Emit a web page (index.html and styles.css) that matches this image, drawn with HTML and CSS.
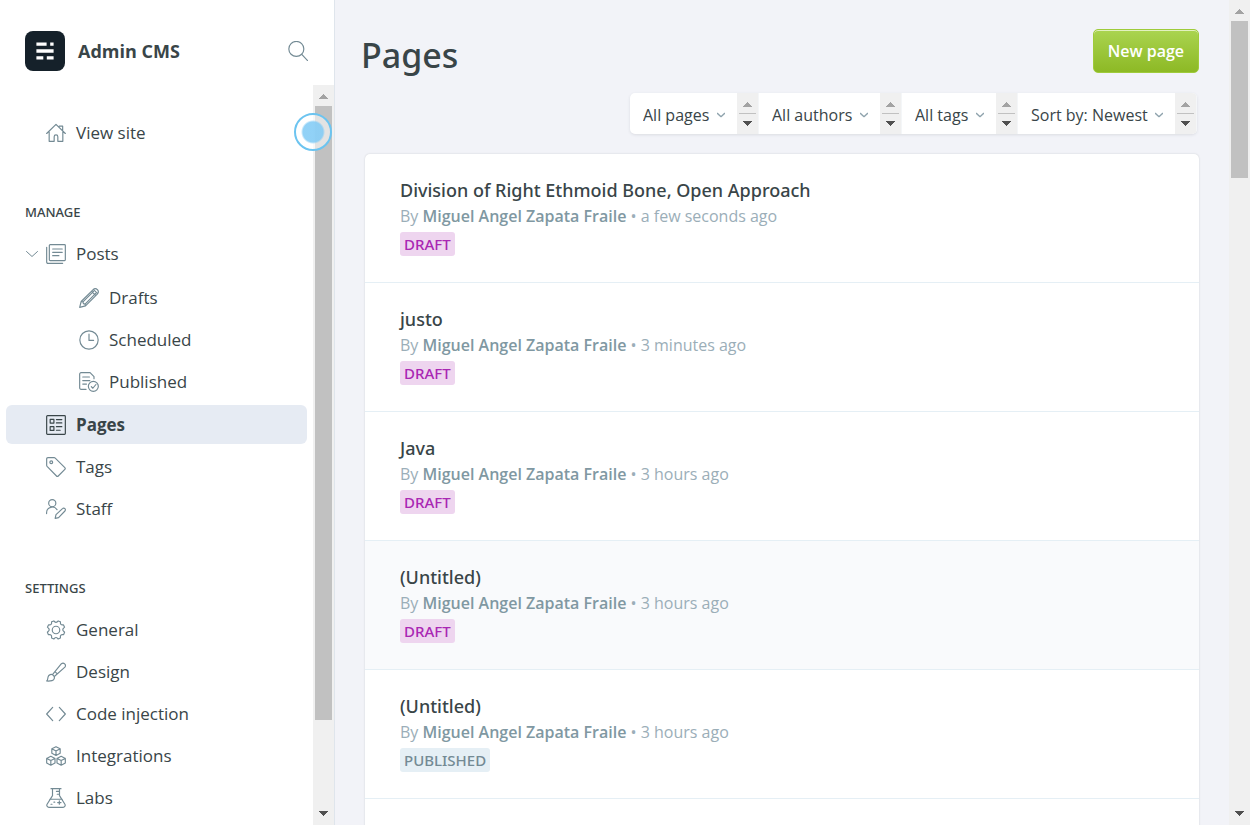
FILE: index.html
```html
<!DOCTYPE html>
<html lang="en">
<head>
<meta charset="utf-8">
<title>Pages - Admin CMS</title>
<link rel="stylesheet" href="styles.css">
</head>
<body>
<svg class="sprite" aria-hidden="true">
  <symbol id="arrow-up" viewBox="0 0 9 5"><path d="M4 0h1v1h1v1h1v1h1v1h1v1H0V4h1V3h1V2h1V1h1z"/></symbol>
  <symbol id="arrow-down" viewBox="0 0 9 5"><path d="M0 0h9v1H8v1H7v1H6v1H5v1H4V4H3V3H2V2H1V1H0z"/></symbol>
  <symbol id="chevron" viewBox="0 0 24 24"><path d="M1 7l11 10L23 7"/></symbol>
</svg>

<aside class="sidebar">
  <header class="brand">
    <svg class="logo" viewBox="0 0 40 40" aria-hidden="true">
      <rect width="40" height="40" rx="8" fill="#15212a"/>
      <path fill="#fff" d="M11.400 11.400h10.200v3.400H11.400zM25.200 11.400h3.400v3.400h-3.400zM11.400 18.300h17.200v3.400H11.400zM11.400 25.200h6.900v3.400h-6.900zM21.800 25.200h6.800v3.400h-6.800z"/>
    </svg>
    <span class="brand-name">Admin CMS</span>
    <button class="search" type="button" aria-label="Search">
      <svg class="icon" viewBox="0 0 24 24"><circle cx="10" cy="9.500" r="9"/><path d="M16.500 16l7 7.500"/></svg>
    </button>
  </header>

  <div class="sidebar-body">
    <nav class="nav">
      <ul class="nav-list nav-top">
        <li><a class="nav-link" href="#"><svg class="icon" viewBox="0 0 24 24"><path d="M.8 12.600L12 1.600l11.200 11M3.800 11v11h6v-5.500a2.200 2.200 0 0 1 4.400 0V22h6V11M16 3.800h4v4.800"/></svg>View site</a></li>
      </ul>

      <h2 class="nav-heading">Manage</h2>
      <ul class="nav-list">
        <li>
          <a class="nav-link" href="#"><svg class="icon expander" viewBox="0 0 24 24"><use href="#chevron"/></svg><svg class="icon" viewBox="0 0 24 24"><rect x="4" y=".8" width="19.200" height="19.200" rx="1"/><path d="M.8 4v17.700a1.500 1.500 0 0 0 1.500 1.500H20M8 6h11.500M8 10h11.500M8 14h7.500"/></svg>Posts</a>
          <ul class="nav-list nav-sub">
            <li><a class="nav-link" href="#"><svg class="icon" viewBox="0 0 24 24"><path d="M.8 23.200l1.800-7L17 1.900a3.500 3.500 0 0 1 5 0l.2.200a3.500 3.500 0 0 1 0 5L7.800 21.400zM2.600 16.200l2.200.5.500 2.100 2 .5.500 2.100M4.800 16.700L17.500 4M7.300 19.300L20 6.500M15 3.900l5.200 5.200M17.500 2l4.800 4.800"/></svg>Drafts</a></li>
            <li><a class="nav-link" href="#"><svg class="icon" viewBox="0 0 24 24"><circle cx="12" cy="12" r="11"/><path d="M12 5v7.500h5.500"/></svg>Scheduled</a></li>
            <li><a class="nav-link" href="#"><svg class="icon" viewBox="0 0 24 24"><path d="M8.500 20.800h-6A1.700 1.700 0 0 1 .8 19V2.500A1.700 1.700 0 0 1 2.500.8h10.800L18 5.500V8M4.500 6h8M4.500 10.300h8.500M4.500 14.500h4.500M14.800 17.600l1.800 1.900 3.700-4.500"/><circle cx="17.200" cy="17.200" r="6"/></svg>Published</a></li>
          </ul>
        </li>
        <li><a class="nav-link active" href="#" aria-current="page"><svg class="icon" viewBox="0 0 24 24"><rect x=".8" y=".8" width="22.400" height="22.400" rx="1"/><path d="M5 5.200h4.500v4.500H5zM5 14h4.500v4.500H5zM12.500 5.500H19M12.500 9.500H19M12.500 14H19M12.500 18.300H17"/></svg>Pages</a></li>
        <li><a class="nav-link" href="#"><svg class="icon" viewBox="0 0 24 24"><path d="M.8 2.300A1.500 1.500 0 0 1 2.300.8h7.500a2 2 0 0 1 1.300.5l11.500 11.500a1.500 1.500 0 0 1 0 2.100l-7.900 7.900a1.500 1.500 0 0 1-2.100 0L1.300 11.300a2 2 0 0 1-.5-1.300z"/><circle cx="6.300" cy="6.300" r="1.700"/></svg>Tags</a></li>
        <li><a class="nav-link" href="#"><svg class="icon" viewBox="0 0 24 24"><circle cx="7.500" cy="5" r="4.300"/><path d="M.7 17.500v-1a6.800 6.800 0 0 1 12.500-3.700M11 23.300l1-4.500 7.800-7.300a2 2 0 0 1 2.900 2.900l-7.600 7.900z"/></svg>Staff</a></li>
      </ul>

      <h2 class="nav-heading">Settings</h2>
      <ul class="nav-list">
        <li><a class="nav-link" href="#"><svg class="icon" viewBox="0 0 24 24"><circle cx="12" cy="12" r="4.500"/><path d="M10.400 2.100a2.200 2.200 0 0 0 3.200 0l1-1 2.700 1.100v1.400a2.200 2.200 0 0 0 2.300 2.300H21l1.300 2.700-1.200 1.200a2.200 2.200 0 0 0 0 3.600l1.200 1.300-1.100 2.900h-1.600a2.200 2.200 0 0 0-2.300 2.300v1.700l-2.700 1.200-1-1.100a2.200 2.200 0 0 0-3.200 0l-1 1.100-2.700-1.200v-1.700a2.200 2.200 0 0 0-2.300-2.300H2.800l-1.100-2.900 1.200-1.300a2.200 2.200 0 0 0 0-3.600L1.700 8.600 3 5.900h1.400a2.200 2.200 0 0 0 2.300-2.300V2.200l2.700-1.100z"/></svg>General</a></li>
        <li><a class="nav-link" href="#"><svg class="icon" viewBox="0 0 24 24"><path d="M.8 22.800c1.500-1 1.200-3 1.700-5 .6-2.500 4-4 6.300-1.800s1.400 5.600-1.600 6.400c-2 .5-4.500.5-6.400.4zM8 14.800L18.500 2a3 3 0 0 1 4.200 4.200L10 17.400M10.800 11.600l2.700 2.700"/></svg>Design</a></li>
        <li><a class="nav-link" href="#"><svg class="icon" viewBox="0 0 24 24"><path d="M8 4L.8 12 8 20M16 4l7.200 8L16 20"/></svg>Code injection</a></li>
        <li><a class="nav-link" href="#"><svg class="icon" viewBox="0 0 24 24"><path d="M12 .8l5 2.500v5.500l-5 2.600-5-2.600V3.300zM7 3.300l5 2.600 5-2.600M12 5.900v5.500M5.800 12.400l5 2.500v5.500l-5 2.600-5-2.600v-5.500zM.8 14.900l5 2.600 5-2.600M5.800 17.500V23M18.200 12.400l5 2.500v5.500l-5 2.600-5-2.600v-5.500zM13.200 14.900l5 2.600 5-2.600M18.200 17.500V23"/></svg>Integrations</a></li>
        <li><a class="nav-link" href="#"><svg class="icon" viewBox="0 0 24 24"><path d="M6 .8h12M7.800.8v8.400L1.300 19.500a2.500 2.500 0 0 0 2.200 3.700h17a2.500 2.500 0 0 0 2.200-3.700L16.200 9.200V.8M4.500 13.500h15M12.500 4h3.500M13.500 7.500H16M16 15.500v4M14 17.500h4M6 19.500h1.200M9.500 17h1"/></svg>Labs</a></li>
      </ul>
    </nav>
    <div class="scrollbar" aria-hidden="true">
      <svg class="arrow arrow-off"><use href="#arrow-up"/></svg>
      <div class="track"><div class="thumb thumb-nav"></div></div>
      <svg class="arrow"><use href="#arrow-down"/></svg>
    </div>
    <div class="touch" aria-hidden="true"></div>
  </div>
</aside>

<main class="main">
  <header class="page-header">
    <h1>Pages</h1>
    <button class="new-page" type="button">New page</button>
  </header>

  <div class="filters">
    <div class="filter">
      <select aria-label="Type"><option>All pages</option></select>
      <svg class="icon caret" viewBox="0 0 24 24"><use href="#chevron"/></svg>
    </div>
    <div class="stub" aria-hidden="true"><svg class="arrow arrow-off"><use href="#arrow-up"/></svg><span class="stub-line"></span><svg class="arrow"><use href="#arrow-down"/></svg></div>
    <div class="filter">
      <select aria-label="Author"><option>All authors</option></select>
      <svg class="icon caret" viewBox="0 0 24 24"><use href="#chevron"/></svg>
    </div>
    <div class="stub" aria-hidden="true"><svg class="arrow arrow-off"><use href="#arrow-up"/></svg><span class="stub-line"></span><svg class="arrow"><use href="#arrow-down"/></svg></div>
    <div class="filter">
      <select aria-label="Tag"><option>All tags</option></select>
      <svg class="icon caret" viewBox="0 0 24 24"><use href="#chevron"/></svg>
    </div>
    <div class="stub" aria-hidden="true"><svg class="arrow arrow-off"><use href="#arrow-up"/></svg><span class="stub-line"></span><svg class="arrow"><use href="#arrow-down"/></svg></div>
    <div class="filter">
      <select aria-label="Order"><option>Sort by: Newest</option></select>
      <svg class="icon caret" viewBox="0 0 24 24"><use href="#chevron"/></svg>
    </div>
    <div class="stub" aria-hidden="true"><svg class="arrow arrow-off"><use href="#arrow-up"/></svg><span class="stub-line"></span><svg class="arrow"><use href="#arrow-down"/></svg></div>
  </div>

  <ul class="pages">
    <li><a class="page" href="#">
      <h3>Division of Right Ethmoid Bone, Open Approach</h3>
      <p>By <b>Miguel Angel Zapata Fraile</b> • a few seconds ago</p>
      <span class="badge draft">DRAFT</span>
    </a></li>
    <li><a class="page" href="#">
      <h3>justo</h3>
      <p>By <b>Miguel Angel Zapata Fraile</b> • 3 minutes ago</p>
      <span class="badge draft">DRAFT</span>
    </a></li>
    <li><a class="page" href="#">
      <h3>Java</h3>
      <p>By <b>Miguel Angel Zapata Fraile</b> • 3 hours ago</p>
      <span class="badge draft">DRAFT</span>
    </a></li>
    <li><a class="page hovered" href="#">
      <h3>(Untitled)</h3>
      <p>By <b>Miguel Angel Zapata Fraile</b> • 3 hours ago</p>
      <span class="badge draft">DRAFT</span>
    </a></li>
    <li><a class="page" href="#">
      <h3>(Untitled)</h3>
      <p>By <b>Miguel Angel Zapata Fraile</b> • 3 hours ago</p>
      <span class="badge published">PUBLISHED</span>
    </a></li>
  </ul>
</main>

<div class="scrollbar" aria-hidden="true">
  <svg class="arrow arrow-off"><use href="#arrow-up"/></svg>
  <div class="track"><div class="thumb thumb-main"></div></div>
  <svg class="arrow"><use href="#arrow-down"/></svg>
</div>
</body>
</html>
```

FILE: styles.css
```css
* { box-sizing: border-box; }

body {
  display: flex;
  height: 100vh;
  margin: 0;
  overflow: hidden;
  background: #f2f3f8;
  color: #394548;
  font: 16px/20px "Open Sans", "Noto Sans", sans-serif;
}

h1, h2, h3, p, ul { margin: 0; padding: 0; }
ul { list-style: none; }
a { color: inherit; text-decoration: none; }
button, select { font: inherit; color: inherit; }

.sprite { position: absolute; width: 0; height: 0; }

.icon {
  flex: none;
  width: 20px;
  height: 20px;
  fill: none;
  stroke: #738a94;
  stroke-width: 1.4;
  stroke-linecap: round;
  stroke-linejoin: round;
}

/* Sidebar */
.sidebar {
  display: flex;
  flex: none;
  flex-direction: column;
  width: 335px;
  background: #fff;
  border-right: 1px solid #dfe5ec;
}

.brand {
  display: flex;
  align-items: center;
  padding: 31px 26px 14px 25px;
}
.logo { width: 40px; height: 40px; }
.brand-name {
  flex: 1;
  margin-left: 13px;
  font-size: 18px;
  font-weight: 700;
}
.search {
  display: flex;
  padding: 0;
  background: none;
  border: 0;
}

.sidebar-body {
  position: relative;
  display: flex;
  flex: 1;
  min-height: 0;
}
.nav {
  flex: 1;
  padding: 28px 6px 0;
  overflow: hidden;
}
.nav-list {
  display: flex;
  flex-direction: column;
  gap: 3px;
}
.nav-sub { padding: 5px 0 1px; }
.nav-heading {
  margin: 50px 0 12px 19px;
  font-family: "Noto Sans", "Open Sans", sans-serif;
  font-size: 13px;
  font-weight: 500;
  line-height: 20px;
  text-transform: uppercase;
}
.nav-link {
  display: flex;
  align-items: center;
  gap: 10px;
  height: 39px;
  padding-left: 40px;
  border-radius: 6px;
  font-size: 17px;
}
.nav-sub .nav-link { padding-left: 73px; }
.nav-link .expander {
  width: 12px;
  height: 12px;
  margin: 0 -2px 0 -20px;
  stroke-width: 2;
}
.nav-link.active {
  background: #e6ebf3;
  font-weight: 700;
}
.active .icon { stroke: #394548; }

.touch {
  position: absolute;
  top: 28px;
  right: 2px;
  width: 38px;
  height: 38px;
  border: 2px solid #6cc4f0;
  border-radius: 50%;
  background: radial-gradient(circle, rgba(139, 207, 246, .95) 10px, rgba(255, 255, 255, .55) 12px);
}

/* Scrollbars */
.scrollbar {
  display: flex;
  flex: none;
  flex-direction: column;
  align-items: center;
  width: 21px;
  padding: 9px 0;
  background: #f0f0f0;
}
.track {
  display: flex;
  flex: 1;
  align-items: flex-start;
  margin: 7px 0;
}
.thumb { width: 17px; background: #c1c1c1; }
.thumb-nav { height: 88%; }
.thumb-main { height: 20%; }
.arrow {
  flex: none;
  width: 9px;
  height: 5px;
  fill: #505050;
}
.arrow-off { fill: #a3a3a3; }

/* Content */
.main {
  flex: 1;
  min-width: 0;
  padding: 29px 30px 0;
  overflow: hidden;
}
.page-header {
  display: flex;
  align-items: flex-start;
  justify-content: space-between;
}
h1 {
  margin-left: -4px;
  font-family: "Noto Sans", "Open Sans", sans-serif;
  font-size: 34px;
  font-weight: 500;
  line-height: 52px;
}
.new-page {
  height: 44px;
  padding: 0 14px;
  border: 1px solid #9fcb3b;
  border-radius: 5px;
  background: linear-gradient(#aad450, #8db925);
  box-shadow: inset 0 1px 0 #e2f1bf;
  color: #fff;
  font-weight: 600;
}

.filters {
  display: flex;
  width: fit-content;
  height: 41px;
  margin: 12px 2px 20px auto;
  overflow: hidden;
  border-radius: 5px;
  background: #fff;
  box-shadow: 0 1px 3px rgba(57, 69, 72, .12);
}
.filter {
  display: flex;
  align-items: center;
  gap: 7px;
  padding: 2px 12px 0 13px;
}
.filter select {
  padding: 0;
  border: 0;
  background: none;
  appearance: none;
}
.filter .caret {
  width: 8px;
  height: 8px;
  stroke: #8fa3ad;
  stroke-width: 4;
}
.stub {
  display: flex;
  flex-direction: column;
  align-items: center;
  justify-content: center;
  gap: 6px;
  width: 22px;
  border-right: 1px solid #f4f6f8;
  background: #f0f0f0;
}
.stub-line { width: 17px; height: 1px; margin-bottom: 1px; background: #c1c1c1; }

.pages {
  min-height: 100vh;
  border-radius: 5px;
  background: #fff;
  box-shadow: 0 0 2px rgba(57, 69, 72, .2);
}
.page {
  display: block;
  padding: 23px 35px 26px;
  border-bottom: 1px solid #e5eff5;
}
.page h3 {
  font-family: "Noto Sans", "Open Sans", sans-serif;
  font-size: 18px;
  font-weight: 500;
  line-height: 26px;
}
.page p {
  padding: 3px 0 6px;
  color: #9baeb8;
  font-size: 16px;
  line-height: 20px;
}
.page b { color: #8098a2; font-weight: 600; }
.hovered { background: #f9fafc; }

.badge {
  display: block;
  width: fit-content;
  padding: 0 4px;
  border-radius: 3px;
  font-family: "Noto Sans", "Open Sans", sans-serif;
  font-size: 15px;
  font-weight: 500;
  line-height: 24px;
}
.draft { background: #eed5ef; color: #a927b3; }
.published { background: #e5eff5; color: #738a94; }
```
